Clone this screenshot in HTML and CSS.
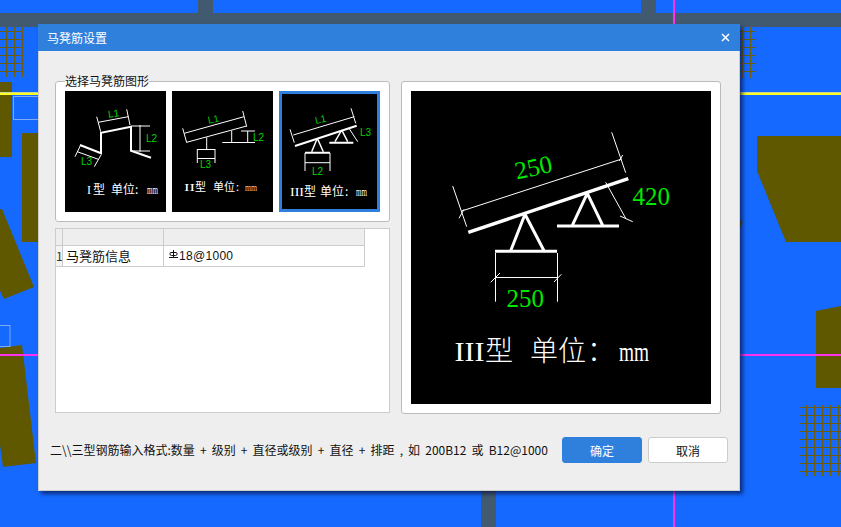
FILE: index.html
```html
<!DOCTYPE html>
<html lang="zh-CN">
<head>
<meta charset="utf-8">
<title>马凳筋设置</title>
<link rel="stylesheet" href="styles.css">
</head>
<body>
<svg class="canvas" viewBox="0 0 841 527" width="841" height="527" aria-hidden="true">
  <rect class="band" x="0" y="13" width="841" height="14"/>
  <rect class="band" x="198" y="0" width="15" height="13"/>
  <rect class="band" x="641" y="0" width="15" height="13"/>
  <rect class="band" x="481" y="491" width="15" height="36"/>
  <path class="olive" d="M0 82H12V157H0Z"/>
  <path class="olive" d="M22 133H38V242H22Z"/>
  <path class="olive" d="M0 209L2 209L34 287L4 299L0 291Z"/>
  <path class="olive" d="M0 348L22 345L36 463L3 467L0 445Z"/>
  <path class="olive" d="M757 136H841V242H786L757 171Z"/>
  <path class="olive" d="M816 311L841 306V388H816Z"/>
  <path class="olive" d="M740 221H743L740 228Z"/>
  <path class="mesh" d="M6.500 27V77M14.500 27V77M22.500 27V77M0 31.500H23M0 39.500H23M0 47.500H23M0 55.500H23M0 63.500H23M0 71.500H23"/>
  <path class="mesh" d="M742.500 27V78M750.500 27V78M740 31.500H755M740 39.500H755M740 47.500H755M740 55.500H755M740 63.500H755M740 71.500H755"/>
  <path class="mesh" d="M806.500 405V476M814.500 405V476M822.500 405V476M830.500 405V476M838.500 405V476M799 407.500H841M799 415.500H841M799 423.500H841M799 431.500H841M799 439.500H841M799 447.500H841M799 455.500H841M799 463.500H841M799 471.500H841"/>
  <rect class="outline" x="13.500" y="96.500" width="30" height="23"/>
  <rect class="outline" x="-5" y="325.500" width="15" height="21"/>
  <path class="halo" d="M0 92.500H841"/>
  <path class="yellow" d="M0 94H841"/>
  <path class="magenta" d="M0 355H841M674 0V527"/>
</svg>

<section class="dialog">
  <header class="titlebar">
    <span class="title">马凳筋设置</span>
    <svg class="close" viewBox="0 0 9 9" width="9" height="9"><path d="M1 1L8 8M8 1L1 8"/></svg>
  </header>
  <div class="body">
    <div class="main">
      <div class="left">
        <fieldset class="group">
          <legend class="legend">选择马凳筋图形</legend>
          <div class="thumbs">
            <svg class="thumb" viewBox="65 91 101 121" width="101" height="121">
              <path class="w2" d="M80 145L101 153.300V132.700L131 126.700V150.700L151 157.700"/>
              <path class="w1" d="M98.300 122.300L128.300 116.700M96.700 116.700L100.700 131.700M126.700 109.300L130 125M131.700 126H150M131.700 151H150M140 125V151.700M80.700 145L75 156.700M101 155L94.300 166.700M77.300 151.700L98.300 159.300"/>
              <text class="dim" x="108" y="117" transform="rotate(-8 113 114)">L1</text>
              <text class="dim" x="146" y="142">L2</text>
              <text class="dim" x="81" y="165">L3</text>
              <text class="label-s" y="194"><tspan class="latin" x="87">I</tspan><tspan x="93">型</tspan><tspan x="111">单位</tspan><tspan x="135">:</tspan><tspan class="latin" x="147" textLength="11" lengthAdjust="spacingAndGlyphs">mm</tspan></text>
            </svg>
            <svg class="thumb" viewBox="172 91 101 121" width="101" height="121">
              <path class="w1" d="M182.700 128.300L186.700 142.700M242.700 111L246.700 126.700M184.300 133.300L244 116.700M186.700 142.300L246.700 126M206.700 137.300V149.300M197.300 149.500H215M197.300 149V163M215 149V163M197 158.500H215M231.700 130.700V142.300M222.300 142.500H255M241 131H255M247.700 131V142"/>
              <text class="dim" x="208" y="123" transform="rotate(-10 213 120)">L1</text>
              <text class="dim" x="253" y="141">L2</text>
              <text class="dim" x="200" y="168">L3</text>
              <text class="label-xs" y="191"><tspan class="latin" x="184" textLength="11" lengthAdjust="spacingAndGlyphs">II</tspan><tspan x="195">型</tspan><tspan x="213">单位</tspan><tspan x="236">:</tspan><tspan class="latin unit" x="245" textLength="12" lengthAdjust="spacingAndGlyphs">mm</tspan></text>
            </svg>
            <svg class="thumb thumb-on" viewBox="282 94 95 115" width="95" height="115">
              <path class="w2" d="M295 146L356.700 125.700M305 152.700H330M329.300 142.700H353.300"/>
              <path class="w15" d="M317.300 138.300L311.700 151.700M317.300 138.300L323.300 151.700M341.700 130L335 141.700M341.700 130L347.700 141.700"/>
              <path class="w1" d="M293.300 135L354.300 116.700M290 129.300L294.300 142.700M351 108.300L355.700 123.300M305 153V171M330 153V171M305 162.700H330M349 128.300L357.700 141.700"/>
              <text class="dim" x="315" y="123" transform="rotate(-12 320 120)">L1</text>
              <text class="dim" x="312" y="175">L2</text>
              <text class="dim" x="360" y="136">L3</text>
              <text class="label-s" y="196"><tspan class="latin" x="290" textLength="14" lengthAdjust="spacingAndGlyphs">III</tspan><tspan x="304">型</tspan><tspan x="320">单位</tspan><tspan x="345">:</tspan><tspan class="latin" x="356" textLength="11" lengthAdjust="spacingAndGlyphs">mm</tspan></text>
            </svg>
          </div>
        </fieldset>
        <div class="sheet">
          <table class="grid">
            <colgroup><col class="c-index"><col class="c-name"><col class="c-value"></colgroup>
            <thead><tr><th></th><th></th><th></th></tr></thead>
            <tbody>
              <tr>
                <td class="index">1</td>
                <td class="name">马凳筋信息</td>
                <td class="value"><svg class="rebar" viewBox="0 0 9 9" width="9" height="9"><path d="M0 7.500H9M4.500 0V7.500M2 2.500H7Q8 2.500 8 3.500V4Q8 5.500 6.500 5.500H2.500Q1 5.500 1 4V3.500Q1 2.500 2 2.500Z"/></svg>18@1000</td>
              </tr>
            </tbody>
          </table>
        </div>
      </div>
      <div class="preview">
        <svg class="drawing" viewBox="411 91 300 313" width="300" height="313">
          <path class="w35" d="M468.300 232.300L628.300 178.700"/>
          <path class="w3" d="M495 251.300H557M557 226H619M525 214.300L510.700 250.700M525 214.300L544 250.700M587.300 193.300L572.300 225.300M587.300 193.300L602.700 225.300"/>
          <path class="w1" d="M461.700 211L621.700 159M452.700 186L466.700 226.700M611.700 132.300L625.700 172.700M459 218.300L464 209.300M619.300 161L622.700 155M605.700 182.300L625.700 218.300M620 216L632.700 221.700M495.500 253V301.700M557.500 253V301.700M495 277.500H557M490.700 282.300L500 273M554 282L561.300 274.300"/>
          <text class="num" x="514" y="176" transform="rotate(-12 532 165)">250</text>
          <text class="num" x="632.500" y="205">420</text>
          <text class="num" x="506.500" y="307">250</text>
          <text class="big" y="361"><tspan class="latin" x="454.500" textLength="30" lengthAdjust="spacingAndGlyphs">III</tspan><tspan x="485">型</tspan><tspan x="530">单</tspan><tspan x="558">位</tspan><tspan x="587">：</tspan><tspan class="latin" x="619" textLength="30" lengthAdjust="spacingAndGlyphs">mm</tspan></text>
        </svg>
      </div>
    </div>
    <footer class="footer">
      <p class="hint">二\\三型钢筋输入格式:数量 + 级别 + 直径或级别 + 直径 + 排距 , 如 200B12 或 B12@1000</p>
      <button class="btn btn-primary" type="button">确定</button>
      <button class="btn" type="button">取消</button>
    </footer>
  </div>
</section>
</body>
</html>
```

FILE: styles.css
```css
* { box-sizing: border-box; }
html, body { margin: 0; height: 100%; overflow: hidden; }
body {
  background: #1569ff;
  font-family: "Noto Sans CJK SC", "Liberation Sans", sans-serif;
  font-size: 12px;
  color: #111;
  position: relative;
}
.canvas { position: absolute; left: 0; top: 0; display: block; }
.band { fill: #425a70; }
.olive { fill: #5f5800; }
.mesh { fill: none; stroke: #6b5d10; stroke-width: 1; }
.outline { fill: none; stroke: #7fabf5; stroke-width: 1; }
.halo { stroke: #c9d69a; stroke-width: 1; }
.yellow { stroke: #ffff20; stroke-width: 2; }
.magenta { stroke: #ff30f0; stroke-width: 2; fill: none; }

.dialog {
  position: absolute;
  left: 38px;
  top: 24px;
  width: 702px;
  height: 467px;
  display: flex;
  flex-direction: column;
  box-shadow: 3px 3px 4px rgba(5, 15, 60, .65);
}
.titlebar {
  height: 27px;
  flex: none;
  background: #2f80dd;
  color: #fff;
  display: flex;
  align-items: center;
  justify-content: space-between;
  padding: 0 10px 0 9px;
}
.title { font-size: 12px; line-height: 27px; }
.close { display: block; }
.close path { fill: none; stroke: #fff; stroke-width: 1.5; }
.body {
  flex: 1;
  background: #eee;
  border: 1px solid #ccc;
  border-top: 0;
  display: flex;
  flex-direction: column;
  padding: 24px 18px 27px 16px;
}
.main { display: flex; gap: 11px; }
.left { width: 335px; display: flex; flex-direction: column; gap: 6px; }

.group {
  margin: 0;
  min-width: 0;
  padding: 4px 9px 9px;
  border: 1px solid #bbb;
  border-radius: 3px;
  background: #fff;
}
.legend {
  padding: 0;
  margin-left: 0;
  font-size: 12px;
  line-height: 12px;
}
.thumbs { display: flex; gap: 6px; }
.thumb { display: block; background: #000; flex: none; }
.thumb-on { box-sizing: content-box; border: 3px solid #2f80dd; }

.w1, .w15, .w2, .w3, .w35 { fill: none; stroke: #fff; }
.w1 { stroke-width: 1; }
.w15 { stroke-width: 1.500; }
.w2 { stroke-width: 2; }
.w3 { stroke-width: 3; }
.w35 { stroke-width: 3.500; }
.dim { font: 10px "Liberation Sans", sans-serif; fill: #00d400; }
.label-s, .label-xs, .big { font-family: "Noto Sans CJK SC", sans-serif; fill: #fff; }
.label-s { font-size: 12px; }
.label-xs { font-size: 11px; }
.big { font-size: 28px; font-weight: 300; }
.latin { font-family: "Liberation Serif", serif; }
.unit { fill: #f7cf9d; }
.num { font: 25px "Liberation Serif", serif; fill: #00ea00; }

.sheet {
  height: 185px;
  background: #fff;
  border: 1px solid #ccc;
}
.grid { width: 309px; table-layout: fixed; border-collapse: separate; border-spacing: 0; }
.c-index { width: 7px; }
.c-name { width: 101px; }
.c-value { width: 201px; }
.grid th, .grid td {
  padding: 0;
  border-right: 1px solid #ccc;
  border-bottom: 1px solid #ccc;
  font-weight: 400;
}
.grid th { height: 17px; background: #eee; }
.grid td { height: 21px; line-height: 20px; white-space: nowrap; }
.index { font-size: 12px; background: #f4f4f4; color: #333; overflow: hidden; }
.name { font-size: 13px; padding-left: 3px !important; }
.value { font-family: "Liberation Sans", sans-serif; letter-spacing: .3px; padding-left: 5px !important; }
.rebar { vertical-align: 1px; margin-right: 1px; }
.rebar path { fill: none; stroke: #111; stroke-width: 1; }

.preview {
  width: 320px;
  height: 333px;
  margin-top: 6px;
  padding: 9px;
  background: #fff;
  border: 1px solid #bbb;
  border-radius: 3px;
}
.drawing { display: block; background: #000; margin: 0; }

.footer {
  display: flex;
  align-items: center;
  margin-top: auto;
  margin-left: -5px;
  margin-right: -7px;
  gap: 6px;
}
.hint { flex: 1; margin: 0; white-space: nowrap; font-size: 12px; line-height: 26px; word-spacing: 2.450px; }
.btn {
  flex: none;
  width: 80px;
  height: 26px;
  padding: 0;
  border: 1px solid #ccc;
  border-radius: 3px;
  background: #fff;
  color: #111;
  font: inherit;
}
.btn-primary { background: #2f80dd; border-color: #2f80dd; color: #fff; }
```
